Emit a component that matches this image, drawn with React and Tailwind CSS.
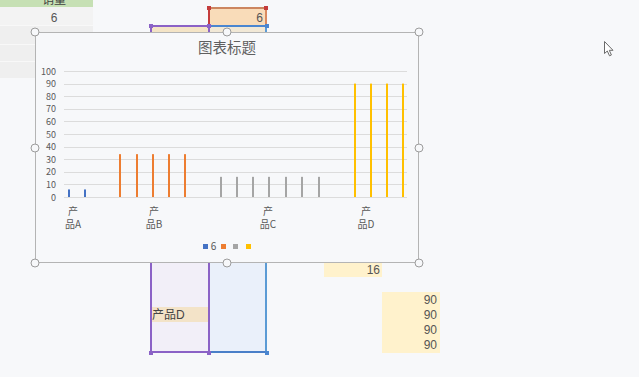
import React from 'react';

const series = [
  { color: '#4472c4', value: 6, xs: [32, 48] },
  { color: '#ed7d31', value: 34, xs: [83, 100, 116, 132, 148] },
  { color: '#a5a5a5', value: 16, xs: [184, 200, 216, 232, 249, 265, 282] },
  { color: '#ffc000', value: 90, xs: [318, 334, 350, 366] },
];

// category labels wrap inside a narrow box, like the chart does
const cats = [
  ['产品A', 'ml-[28px]'],
  ['产品B', 'ml-[63px]'],
  ['产品C', 'ml-[96px]'],
  ['产品D', 'ml-[80px]'],
];

const ticks = [0, 10, 20, 30, 40, 50, 60, 70, 80, 90, 100];

// plot scale: 0 sits at y=136, 100 at y=10
const y = (v) => 136 - v * 1.26;

const Knob = ({ className }) => (
  <span
    className={
      'absolute w-[9px] h-[9px] rounded-full border-[1.5px] border-[#9c9c9c] bg-[#f7f8fa] -translate-x-1/2 -translate-y-1/2 ' +
      className
    }
  />
);

const Square = ({ className }) => (
  <span className={'absolute w-[4px] h-[4px] ' + className} />
);

const Chart = () => (
  <div className="absolute left-[35px] top-[32px] w-[384px] h-[231px]">
    <div className="w-full h-full border border-[#b4b4b4] bg-[#f7f8fa] flex flex-col">
      <div className="h-[28px] flex items-center justify-center text-[14.5px] text-[#5f5f5f] leading-none">
        图表标题
      </div>
      <svg width="382" height="144" className="block shrink-0">
        {ticks.map((t) => (
          <g key={t}>
            <line
              x1="28"
              x2="371"
              y1={Math.round(y(t)) + 0.5}
              y2={Math.round(y(t)) + 0.5}
              stroke="#dcdcdc"
              strokeWidth="1"
            />
            <text
              x="20"
              y={y(t)}
              textAnchor="end"
              dominantBaseline="central"
              fontSize="9"
              fill="#595959"
            >
              {t}
            </text>
          </g>
        ))}
        {series.map((s) =>
          s.xs.map((x) => (
            <rect
              key={s.color + x}
              x={x}
              y={y(s.value)}
              width="2"
              height={s.value * 1.26}
              fill={s.color}
            />
          ))
        )}
      </svg>
      <div className="flex h-[25px] text-[10px] leading-[12.5px] text-[#595959]">
        {cats.map(([c, ml]) => (
          <div key={c} className={'w-[18px] text-center ' + ml}>
            {c}
          </div>
        ))}
      </div>
      <div className="flex-1 flex items-center justify-center text-[10px] leading-none text-[#595959]">
        <span className="w-[5px] h-[5px] bg-[#4472c4]" />
        <span className="ml-[3px]">6</span>
        <span className="ml-[5px] w-[5px] h-[5px] bg-[#ed7d31]" />
        <span className="ml-[7px] w-[5px] h-[5px] bg-[#a5a5a5]" />
        <span className="ml-[8px] w-[5px] h-[5px] bg-[#ffc000]" />
      </div>
    </div>
    <Knob className="left-0 top-0" />
    <Knob className="left-1/2 top-0" />
    <Knob className="left-full top-0" />
    <Knob className="left-0 top-1/2" />
    <Knob className="left-full top-1/2" />
    <Knob className="left-0 top-full" />
    <Knob className="left-1/2 top-full" />
    <Knob className="left-full top-full" />
  </div>
);

const cellC = 'w-[58px] bg-[#f2eff8] border-l-2 border-l-[#8b62c6]';
const cellD = 'w-[59px] bg-[#eaf0fa] border-l-2 border-l-[#8b62c6] border-r-2 border-r-[#5b9bd5]';

const Sheet = () => (
  <div className="flex flex-col text-[12px] text-[#555555] font-['Liberation_Sans','Noto_Sans_CJK_SC',sans-serif]">
    {/* header row, mostly scrolled off */}
    <div className="flex h-[7px]">
      <div className="w-[93px] bg-[#c6e0b4] overflow-hidden flex items-end justify-center pl-[15px]">
        <span className="leading-[16px] text-[12px] shrink-0 -mb-[1px] text-[#404040]">销量</span>
      </div>
    </div>
    <div className="flex h-[18px]">
      <div className="w-[93px] bg-[#f3f3f3] flex items-center justify-center pl-[15px] pt-[3px] leading-[14px]">
        6
      </div>
      <div className="w-[57px]" />
      <div className="w-[58px]" />
      <div className="w-[59px] bg-[#f9dcb9] border-t-2 border-t-[#cc8660] border-l-2 border-l-[#c43c3c] border-r-2 border-r-[#d98a5f] flex items-center justify-end pr-[2px] pt-[1px] leading-[14px]">
        6
      </div>
    </div>
    <div className="flex h-[19px]">
      <div className="w-[93px] bg-[#efefef] border-t border-[#f8f8f8]" />
      <div className="w-[57px]" />
      <div className="w-[58px] bg-[#f4e4c6] border-t-2 border-t-[#8b62c6] border-l-2 border-l-[#8b62c6]" />
      <div className="w-[59px] bg-[#f1e8d6] border-t-2 border-t-[#4a86d0] border-l-2 border-l-[#8b62c6] border-r-2 border-r-[#5b9bd5]" />
    </div>
    {[0, 1].map((i) => (
      <div key={i} className="flex h-[17px]">
        <div className="w-[93px] bg-[#efefef] border-t border-[#f8f8f8]" />
        <div className="w-[57px]" />
        <div className={cellC} />
        <div className={cellD} />
      </div>
    ))}
    <div className="flex h-[184px]">
      <div className="w-[93px]" />
      <div className="w-[57px]" />
      <div className={cellC} />
      <div className={cellD} />
    </div>
    <div className="flex h-[15px]">
      <div className="w-[93px]" />
      <div className="w-[57px]" />
      <div className={cellC} />
      <div className={cellD} />
      <div className="w-[57px]" />
      <div className="w-[58px] bg-[#fff2cc] flex items-center justify-end pr-[2px] leading-[14px]">16</div>
    </div>
    <div className="flex h-[15px]">
      <div className="w-[93px]" />
      <div className="w-[57px]" />
      <div className={cellC} />
      <div className={cellD} />
    </div>
    {['90', '90', '90', '90'].map((v, i) => (
      <div key={i} className={'flex ' + (i === 3 ? 'h-[16px]' : 'h-[15px]')}>
        <div className="w-[93px]" />
        <div className="w-[57px]" />
        <div
          className={
            cellC +
            (i === 3 ? ' border-b-2 border-b-[#8b62c6]' : '') +
            (i === 1 ? ' flex items-center' : '')
          }
        >
          {i === 1 && (
            <div className="w-full h-[16px] bg-[#f3e3c8] text-[12px] leading-[16px] text-[#454545]">产品D</div>
          )}
        </div>
        <div className={cellD + (i === 3 ? ' border-b-2 border-b-[#4a7fc8]' : '')} />
        <div className="w-[57px]" />
        <div className="w-[58px]" />
        <div className="w-[58px] bg-[#fff2cc] flex items-center justify-end pr-[3px] leading-[14px]">{v}</div>
      </div>
    ))}
  </div>
);

export default function App() {
  return (
    <div className="relative w-[639px] h-[377px] overflow-hidden bg-[#f7f8fa] font-['Noto_Sans_CJK_SC',sans-serif]">
      <Sheet />

      {/* range handles */}
      <Square className="left-[207px] top-[6px] bg-[#c43c3c]" />
      <Square className="left-[264px] top-[6px] bg-[#c43c3c]" />
      <Square className="left-[149px] top-[24px] bg-[#8b62c6]" />
      <Square className="left-[207px] top-[24px] bg-[#8b62c6]" />
      <Square className="left-[265px] top-[24px] bg-[#4a86d0]" />
      <Square className="left-[149px] top-[351px] bg-[#8b62c6]" />
      <Square className="left-[207px] top-[351px] bg-[#8b62c6]" />
      <Square className="left-[265px] top-[351px] bg-[#4a86d0]" />

      <Chart />

      {/* mouse pointer */}
      <svg className="absolute left-[603px] top-[40px]" width="12" height="18" viewBox="0 0 12 18">
        <path
          d="M1.5 1.5 L1.5 13.5 L4.3 11 L6.5 15.8 L8.4 15 L6.3 10.3 L10 10.3 Z"
          fill="#ffffff"
          stroke="#6b6b6b"
          strokeWidth="1"
          strokeLinejoin="round"
        />
      </svg>
    </div>
  );
}
